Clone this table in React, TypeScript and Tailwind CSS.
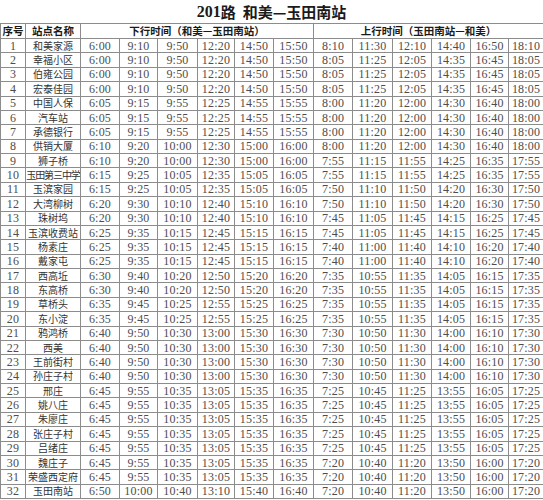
import React from "react";

type Row = { name: string; down: string[]; up: string[] };

const downTimes: Record<string, string[]> = {
  a: ["6:00", "9:10", "9:50", "12:20", "14:50", "15:50"],
  b: ["6:05", "9:15", "9:55", "12:25", "14:55", "15:55"],
  c: ["6:10", "9:20", "10:00", "12:30", "15:00", "16:00"],
  d: ["6:15", "9:25", "10:05", "12:35", "15:05", "16:05"],
  e: ["6:20", "9:30", "10:10", "12:40", "15:10", "16:10"],
  f: ["6:25", "9:35", "10:15", "12:45", "15:15", "16:15"],
  g: ["6:30", "9:40", "10:20", "12:50", "15:20", "16:20"],
  h: ["6:35", "9:45", "10:25", "12:55", "15:25", "16:25"],
  i: ["6:40", "9:50", "10:30", "13:00", "15:30", "16:30"],
  j: ["6:45", "9:55", "10:35", "13:05", "15:35", "16:35"],
  k: ["6:50", "10:00", "10:40", "13:10", "15:40", "16:40"],
};

const upTimes: Record<string, string[]> = {
  a: ["8:10", "11:30", "12:10", "14:40", "16:50", "18:10"],
  b: ["8:05", "11:25", "12:05", "14:35", "16:45", "18:05"],
  c: ["8:00", "11:20", "12:00", "14:30", "16:40", "18:00"],
  d: ["7:55", "11:15", "11:55", "14:25", "16:35", "17:55"],
  e: ["7:50", "11:10", "11:50", "14:20", "16:30", "17:50"],
  f: ["7:45", "11:05", "11:45", "14:15", "16:25", "17:45"],
  g: ["7:40", "11:00", "11:40", "14:10", "16:20", "17:40"],
  h: ["7:35", "10:55", "11:35", "14:05", "16:15", "17:35"],
  i: ["7:30", "10:50", "11:30", "14:00", "16:10", "17:30"],
  j: ["7:25", "10:45", "11:25", "13:55", "16:05", "17:25"],
  k: ["7:20", "10:40", "11:20", "13:50", "16:00", "17:20"],
};

// station, down key, up key
const stops: [string, string, string][] = [
  ["和美家源", "a", "a"],
  ["幸福小区", "a", "b"],
  ["伯雍公园", "a", "b"],
  ["宏泰佳园", "a", "b"],
  ["中国人保", "b", "c"],
  ["汽车站", "b", "c"],
  ["承德银行", "b", "c"],
  ["供销大厦", "c", "c"],
  ["狮子桥", "c", "d"],
  ["玉田第三中学", "d", "d"],
  ["玉滨家园", "d", "e"],
  ["大湾柳树", "e", "e"],
  ["珠树坞", "e", "f"],
  ["玉滨收费站", "f", "f"],
  ["杨素庄", "f", "g"],
  ["戴家屯", "f", "g"],
  ["西高坵", "g", "h"],
  ["东高桥", "g", "h"],
  ["草桥头", "h", "h"],
  ["东小淀", "h", "h"],
  ["鸦鸿桥", "i", "i"],
  ["西美", "i", "i"],
  ["王前街村", "i", "i"],
  ["孙庄子村", "i", "i"],
  ["邢庄", "j", "j"],
  ["姚八庄", "j", "j"],
  ["朱廖庄", "j", "j"],
  ["张庄子村", "j", "j"],
  ["吕绪庄", "j", "j"],
  ["魏庄子", "j", "k"],
  ["荣盛西定府", "j", "k"],
  ["玉田南站", "k", "k"],
];

const rows: Row[] = stops.map(([name, d, u]) => ({ name, down: downTimes[d], up: upTimes[u] }));

const widths = [25, 55, 39, 38, 40, 37, 39, 40, 39, 40, 39, 39, 38, 35];

const cjk = "font-['Noto_Sans_CJK_SC','Noto_Sans',sans-serif]";
const num = "font-['Liberation_Serif','Noto_Sans_CJK_SC',serif]";
const cell = "border border-[#8c8c8c] p-0 text-center align-middle leading-none whitespace-nowrap overflow-hidden";
const time = `${cell} ${num} text-[12px] tracking-[0.2px] text-[#4d4d4d]`;

export default function App() {
  return (
    <div className="w-[543px] h-[500px] overflow-hidden bg-white">
      <div className={`h-[23px] flex items-center justify-center pt-[1px] text-[15px] font-bold text-[#1a1a1a] ${cjk}`}>
        <span className={`${num} text-[16px]`}>201</span>
        <span>路</span>
        <span className="ml-[7px]">和美—玉田南站</span>
      </div>
      <table className="table-fixed border-collapse w-[544px]">
        <colgroup>
          {widths.map((w, i) => (
            <col key={i} style={{ width: w }} />
          ))}
        </colgroup>
        <thead>
          <tr className="h-[15px]">
            <th className={`${cell} ${cjk} text-[10.5px] font-bold text-[#1a1a1a]`}>序号</th>
            <th className={`${cell} ${cjk} text-[10.5px] font-bold text-[#1a1a1a]`}>站点名称</th>
            <th colSpan={6} className={`${cell} ${cjk} text-[10.5px] font-bold text-[#1a1a1a]`}>
              下行时间（和美—玉田南站）
            </th>
            <th colSpan={6} className={`${cell} ${cjk} text-[10.5px] font-bold text-[#1a1a1a]`}>
              上行时间（玉田南站—和美）
            </th>
          </tr>
        </thead>
        <tbody>
          {rows.map((row, i) => (
            <tr key={row.name} className="h-[14.375px]">
              <td className={time}>{i + 1}</td>
              <td
                className={`${cell} ${cjk} text-[10px] text-[#333] ${
                  row.name.length > 5 ? "tracking-[-1.1px]" : ""
                }`}
              >
                {row.name}
              </td>
              {row.down.map((t, j) => (
                <td key={"d" + j} className={time}>
                  {t}
                </td>
              ))}
              {row.up.map((t, j) => (
                <td key={"u" + j} className={time}>
                  {t}
                </td>
              ))}
            </tr>
          ))}
        </tbody>
      </table>
    </div>
  );
}
